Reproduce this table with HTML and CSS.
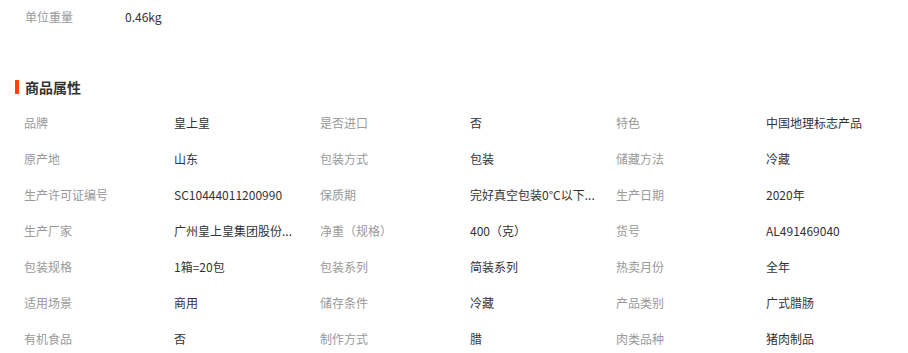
FILE: index.html
```html
<!DOCTYPE html>
<html lang="zh">
<head>
<meta charset="utf-8">
<link rel="stylesheet" href="styles.css">
</head>
<body>
<div class="page">
  <div class="unit">
    <span class="unit-label">单位重量</span>
    <span class="unit-value">0.46kg</span>
  </div>
  <h2 class="title">商品属性</h2>
  <div class="attrs">
    <div class="item"><span class="k">品牌</span><span class="v">皇上皇</span></div>
    <div class="item"><span class="k">是否进口</span><span class="v">否</span></div>
    <div class="item"><span class="k">特色</span><span class="v">中国地理标志产品</span></div>
    <div class="item"><span class="k">原产地</span><span class="v">山东</span></div>
    <div class="item"><span class="k">包装方式</span><span class="v">包装</span></div>
    <div class="item"><span class="k">储藏方法</span><span class="v">冷藏</span></div>
    <div class="item"><span class="k">生产许可证编号</span><span class="v">SC10444011200990</span></div>
    <div class="item"><span class="k">保质期</span><span class="v">完好真空包装0°C以下...</span></div>
    <div class="item"><span class="k">生产日期</span><span class="v">2020年</span></div>
    <div class="item"><span class="k">生产厂家</span><span class="v">广州皇上皇集团股份...</span></div>
    <div class="item"><span class="k">净重（规格）</span><span class="v">400（克）</span></div>
    <div class="item"><span class="k">货号</span><span class="v">AL491469040</span></div>
    <div class="item"><span class="k">包装规格</span><span class="v">1箱=20包</span></div>
    <div class="item"><span class="k">包装系列</span><span class="v">简装系列</span></div>
    <div class="item"><span class="k">热卖月份</span><span class="v">全年</span></div>
    <div class="item"><span class="k">适用场景</span><span class="v">商用</span></div>
    <div class="item"><span class="k">储存条件</span><span class="v">冷藏</span></div>
    <div class="item"><span class="k">产品类别</span><span class="v">广式腊肠</span></div>
    <div class="item"><span class="k">有机食品</span><span class="v">否</span></div>
    <div class="item"><span class="k">制作方式</span><span class="v">腊</span></div>
    <div class="item"><span class="k">肉类品种</span><span class="v">猪肉制品</span></div>
  </div>
</div>
</body>
</html>
```

FILE: styles.css
```css
html, body {
  margin: 0;
  padding: 0;
  background: #fff;
}
body {
  font-family: "Microsoft YaHei", "Noto Sans CJK SC", "Noto Sans", sans-serif;
  font-size: 12px;
  color: #333;
}
.page {
  width: 908px;
}
.unit {
  display: flex;
  height: 32px;
  align-items: center;
  padding-left: 25px;
}
.unit-label {
  width: 100px;
  color: #999;
}
.unit-value {
  color: #333;
}
.title {
  margin: 48px 0 0 15px;
  padding-left: 6px;
  border-left: 4px solid #ff4400;
  font-size: 14px;
  font-weight: bold;
  color: #333;
  line-height: 14px;
  height: 14px;
  display: flex;
  align-items: center;
  margin-bottom: 10px;
}
.attrs {
  display: grid;
  grid-template-columns: repeat(3, 296px);
  grid-auto-rows: 36px;
  padding-left: 24px;
  margin-top: 3px;
}
.item {
  display: flex;
  align-items: center;
}
.k {
  width: 150px;
  flex: none;
  color: #999;
}
.v {
  max-width: 140px;
  color: #333;
  white-space: nowrap;
}
```
